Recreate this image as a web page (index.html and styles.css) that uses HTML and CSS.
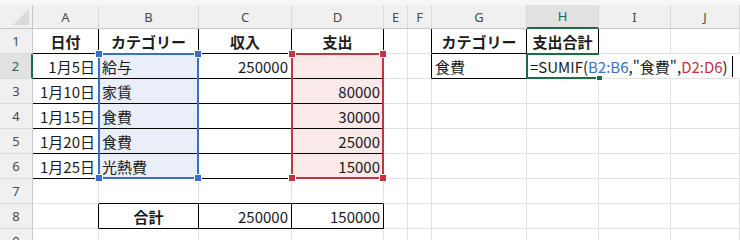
FILE: index.html
```html
<!DOCTYPE html>
<html lang="ja">
<head>
    <meta charset="UTF-8">
    <meta name="viewport" content="width=device-width, initial-scale=1.0">
    <title>Sheet1</title>
    <link rel="stylesheet" href="styles.css">
</head>
<body>

    <div class="strip"></div>

    <div class="sheet-wrap">
        <div class="sheet">
            <!-- column headers -->
            <div class="corner"></div>
            <div class="col-head">A</div>
            <div class="col-head">B</div>
            <div class="col-head">C</div>
            <div class="col-head">D</div>
            <div class="col-head">E</div>
            <div class="col-head">F</div>
            <div class="col-head">G</div>
            <div class="col-head active">H</div>
            <div class="col-head">I</div>
            <div class="col-head">J</div>

            <!-- row 1 -->
            <div class="row-head">1</div>
            <div class="cell head br bb">日付</div>
            <div class="cell head br bb">カテゴリー</div>
            <div class="cell head br bb">収入</div>
            <div class="cell head br bb">支出</div>
            <div class="cell"></div>
            <div class="cell br"></div>
            <div class="cell head br bb">カテゴリー</div>
            <div class="cell head br bb">支出合計</div>
            <div class="cell"></div>
            <div class="cell"></div>

            <!-- row 2 -->
            <div class="row-head active">2</div>
            <div class="cell num br bb">1月5日</div>
            <div class="cell blue br bb">給与</div>
            <div class="cell num br bb">250000</div>
            <div class="cell red br bb"></div>
            <div class="cell"></div>
            <div class="cell br"></div>
            <div class="cell br bb">食費</div>
            <div class="cell editing">
                <span class="formula">=SUMIF(<span class="ref-b">B2:B6</span>,"食費",<span class="ref-d">D2:D6</span>)</span><span class="caret"></span>
            </div>
            <div class="cell open"></div>
            <div class="cell open"></div>

            <!-- row 3 -->
            <div class="row-head">3</div>
            <div class="cell num br bb">1月10日</div>
            <div class="cell blue br bb">家賃</div>
            <div class="cell br bb"></div>
            <div class="cell num red br bb">80000</div>
            <div class="cell"></div>
            <div class="cell"></div>
            <div class="cell"></div>
            <div class="cell"></div>
            <div class="cell"></div>
            <div class="cell"></div>

            <!-- row 4 -->
            <div class="row-head">4</div>
            <div class="cell num br bb">1月15日</div>
            <div class="cell blue br bb">食費</div>
            <div class="cell br bb"></div>
            <div class="cell num red br bb">30000</div>
            <div class="cell"></div>
            <div class="cell"></div>
            <div class="cell"></div>
            <div class="cell"></div>
            <div class="cell"></div>
            <div class="cell"></div>

            <!-- row 5 -->
            <div class="row-head">5</div>
            <div class="cell num br bb">1月20日</div>
            <div class="cell blue br bb">食費</div>
            <div class="cell br bb"></div>
            <div class="cell num red br bb">25000</div>
            <div class="cell"></div>
            <div class="cell"></div>
            <div class="cell"></div>
            <div class="cell"></div>
            <div class="cell"></div>
            <div class="cell"></div>

            <!-- row 6 -->
            <div class="row-head">6</div>
            <div class="cell num br bb">1月25日</div>
            <div class="cell blue br bb">光熱費</div>
            <div class="cell br bb"></div>
            <div class="cell num red br bb">15000</div>
            <div class="cell"></div>
            <div class="cell"></div>
            <div class="cell"></div>
            <div class="cell"></div>
            <div class="cell"></div>
            <div class="cell"></div>

            <!-- row 7 -->
            <div class="row-head">7</div>
            <div class="cell"></div>
            <div class="cell bb"></div>
            <div class="cell bb"></div>
            <div class="cell bb"></div>
            <div class="cell"></div>
            <div class="cell"></div>
            <div class="cell"></div>
            <div class="cell"></div>
            <div class="cell"></div>
            <div class="cell"></div>

            <!-- row 8 -->
            <div class="row-head">8</div>
            <div class="cell br"></div>
            <div class="cell head br bb">合計</div>
            <div class="cell num br bb">250000</div>
            <div class="cell num br bb">150000</div>
            <div class="cell"></div>
            <div class="cell"></div>
            <div class="cell"></div>
            <div class="cell"></div>
            <div class="cell"></div>
            <div class="cell"></div>

            <!-- row 9 -->
            <div class="row-head">9</div>
            <div class="cell"></div>
            <div class="cell"></div>
            <div class="cell"></div>
            <div class="cell"></div>
            <div class="cell"></div>
            <div class="cell"></div>
            <div class="cell"></div>
            <div class="cell"></div>
            <div class="cell"></div>
            <div class="cell"></div>
        </div>

        <!-- formula reference highlights and the active cell, on a matching grid -->
        <div class="marks">
            <div class="range range-b"><i class="tl"></i><i class="tr"></i><i class="bl"></i><i class="br"></i></div>
            <div class="range range-d"><i class="tl"></i><i class="tr"></i><i class="bl"></i><i class="br"></i></div>
            <div class="active-cell"><i class="fill"></i></div>
        </div>
    </div>

</body>
</html>
```

FILE: styles.css
```css
body {
    margin: 0;
    background-color: #fff;
    font-family: "Noto Sans CJK JP", "Noto Sans", sans-serif;
    color: #1b1b1b;
    overflow: hidden;
}

.strip {
    height: 5px;
    background-color: #f7f7f7;
}

.sheet-wrap {
    position: relative;
}

.sheet,
.marks {
    display: grid;
    grid-template-columns: 33px 66px 100px 93px 92px 24px 24px 95px 72px 72px 1fr;
    grid-template-rows: 24px repeat(9, 25px);
}

.sheet {
    background-color: #fff;
}

.marks {
    position: absolute;
    inset: 0;
    pointer-events: none;
}

/* headers */
.corner,
.col-head,
.row-head {
    box-sizing: border-box;
    background-color: #f0f0f0;
    color: #4a4a4a;
    font-family: "Noto Sans", sans-serif;
    font-size: 13px;
    display: flex;
    align-items: center;
    justify-content: center;
}

.corner {
    position: relative;
    border-right: 1px solid #c8c8c8;
    border-bottom: 1px solid #c8c8c8;
}

.corner::after {
    content: "";
    position: absolute;
    right: 3px;
    bottom: 3px;
    width: 0;
    height: 0;
    border-left: 16px solid transparent;
    border-bottom: 16px solid #d9d9d9;
}

.col-head {
    border-right: 1px solid #dadada;
    border-bottom: 1px solid #c8c8c8;
}

.col-head.active {
    background-color: #e1e1e1;
    color: #1e6c41;
    border-bottom: 2px solid #1e6c41;
}

.row-head {
    border-right: 1px solid #c8c8c8;
    border-bottom: 1px solid #dadada;
}

.row-head.active {
    background-color: #e1e1e1;
    color: #1e6c41;
    border-right: 2px solid #1e6c41;
}

/* cells */
.cell {
    box-sizing: border-box;
    border-right: 1px solid #e1e1e1;
    border-bottom: 1px solid #e1e1e1;
    font-size: 15px;
    line-height: 1;
    padding: 0 3px 4px;
    display: flex;
    align-items: flex-end;
    white-space: nowrap;
    min-width: 0;
}

.cell.head {
    font-weight: bold;
    justify-content: center;
}

.cell.num {
    justify-content: flex-end;
}

.cell.br {
    border-right-color: #000;
}

.cell.bb {
    border-bottom-color: #000;
}

.cell.blue {
    background-color: #e9eef8;
}

.cell.red {
    background-color: #f9e9e9;
}

.cell.editing,
.cell.open {
    border-right-color: transparent;
}

.cell.editing {
    overflow: visible;
}

.ref-b {
    color: #3b6fc6;
}

.ref-d {
    color: #c7313c;
}

.caret {
    display: inline-block;
    flex: none;
    width: 1px;
    height: 21px;
    margin-left: 4px;
    margin-bottom: -3px;
    background-color: #000;
}

/* reference outlines drawn over the cells */
.range {
    position: relative;
    box-sizing: border-box;
    margin: -1px 0 0 -1px;
    border: 2px solid;
}

.range-b {
    grid-column: 3;
    grid-row: 3 / 8;
    border-color: #3b6fc6;
    color: #3b6fc6;
}

.range-d {
    grid-column: 5;
    grid-row: 3 / 8;
    border-color: #c2363f;
    color: #c2363f;
}

.range i {
    position: absolute;
    width: 6px;
    height: 6px;
    background-color: currentColor;
    box-shadow: 0 0 0 1px #fff;
}

.range .tl { top: -4px; left: -4px; }
.range .tr { top: -4px; right: -4px; }
.range .bl { bottom: -4px; left: -4px; }
.range .br { bottom: -4px; right: -4px; }

/* the cell being edited: its right edge stays open while the formula runs on */
.active-cell {
    position: relative;
    grid-column: 9;
    grid-row: 3;
    box-sizing: border-box;
    margin: -1px 0 0 -1px;
    border: 2px solid #1e6c41;
    border-right: none;
}

.active-cell .fill {
    position: absolute;
    right: -3px;
    bottom: -3px;
    width: 5px;
    height: 4px;
    background-color: #1e6c41;
    box-shadow: 0 0 0 1px #fff;
}
```
